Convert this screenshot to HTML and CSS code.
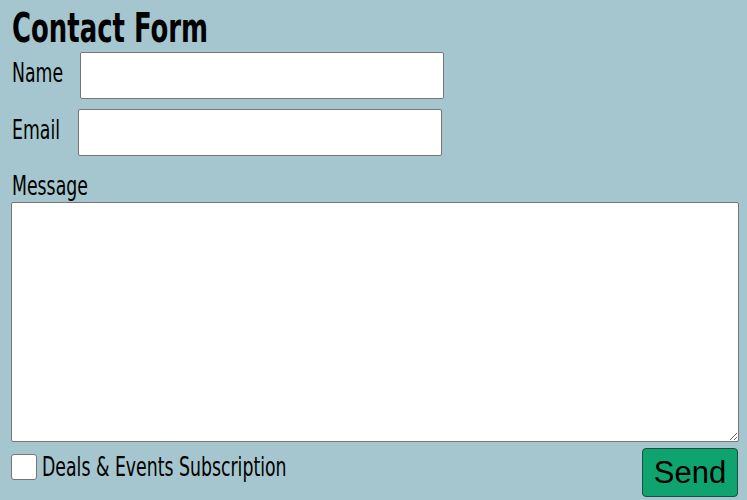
FILE: index.html
```html
<!DOCTYPE html>
<html>
<head>
<meta charset="utf-8">
<link rel="stylesheet" href="styles.css">
</head>
<body>
<form class="form">
  <h1 class="title"><span class="narrow">Contact Form</span></h1>
  <div class="row row-name">
    <label class="label narrow">Name</label>
    <input class="field" type="text">
  </div>
  <div class="row row-email">
    <label class="label narrow">Email</label>
    <input class="field" type="text">
  </div>
  <div class="msg-label"><label class="label narrow">Message</label></div>
  <textarea class="message"></textarea>
  <div class="bottom">
    <label class="check">
      <input class="box" type="checkbox">
      <span class="label narrow">Deals &amp; Events Subscription</span>
    </label>
    <button class="send" type="button">Send</button>
  </div>
</form>
</body>
</html>
```
FILE: styles.css
```css
html, body {
  margin: 0;
  padding: 0;
  background: #a5c6ce;
}
.form {
  display: flex;
  flex-direction: column;
  padding: 0 9px 0 11px;
  font-family: "DejaVu Sans Condensed", "DejaVu Sans", sans-serif;
  font-stretch: condensed;
  color: #000;
}
.narrow {
  display: inline-block;
  transform-origin: left center;
  transform: scaleX(0.74);
  white-space: nowrap;
}
.title {
  margin: 6px 0 0 1px;
  font-size: 40px;
  line-height: 44px;
  font-weight: bold;
}
.title .narrow { transform: scaleX(0.72); }
.row {
  display: flex;
  align-items: center;
  height: 47px;
}
.row-name { margin-top: 2px; }
.row-email { margin-top: 10px; }
.label {
  font-size: 26px;
  margin-left: 1px;
}
.row .label { margin-right: -1px; margin-bottom: 5px; }
.row-email .label { margin-right: 1px; }
.field {
  box-sizing: border-box;
  width: 364px;
  height: 47px;
  margin: 0;
  border: 1px solid #767676;
  border-radius: 2px;
  background: #fff;
}
.msg-label {
  margin-top: 15px;
  line-height: 30px;
  height: 30px;
}
.message {
  box-sizing: border-box;
  width: 728px;
  height: 240px;
  margin: 1px 0 0;
  border: 1px solid #767676;
  border-radius: 2px;
  background: #fff;
  resize: both;
}
.bottom {
  display: flex;
  justify-content: space-between;
  align-items: flex-start;
  margin-top: 6px;
}
.check {
  display: flex;
  align-items: center;
  gap: 5px;
  margin-top: 4px;
}
.check .label { margin-left: 0; }
.box {
  appearance: none;
  -webkit-appearance: none;
  box-sizing: border-box;
  width: 26px;
  height: 26px;
  margin: 0;
  border: 1px solid #767676;
  border-radius: 3px;
  background: #fff;
}
.send {
  box-sizing: border-box;
  width: 96px;
  height: 49px;
  padding: 0;
  border: 1px solid #1f4d3d;
  border-radius: 4px;
  background: #0fa36f;
  color: #000;
  font-family: "Liberation Sans", Arial, sans-serif;
  font-size: 31px;
}
```
